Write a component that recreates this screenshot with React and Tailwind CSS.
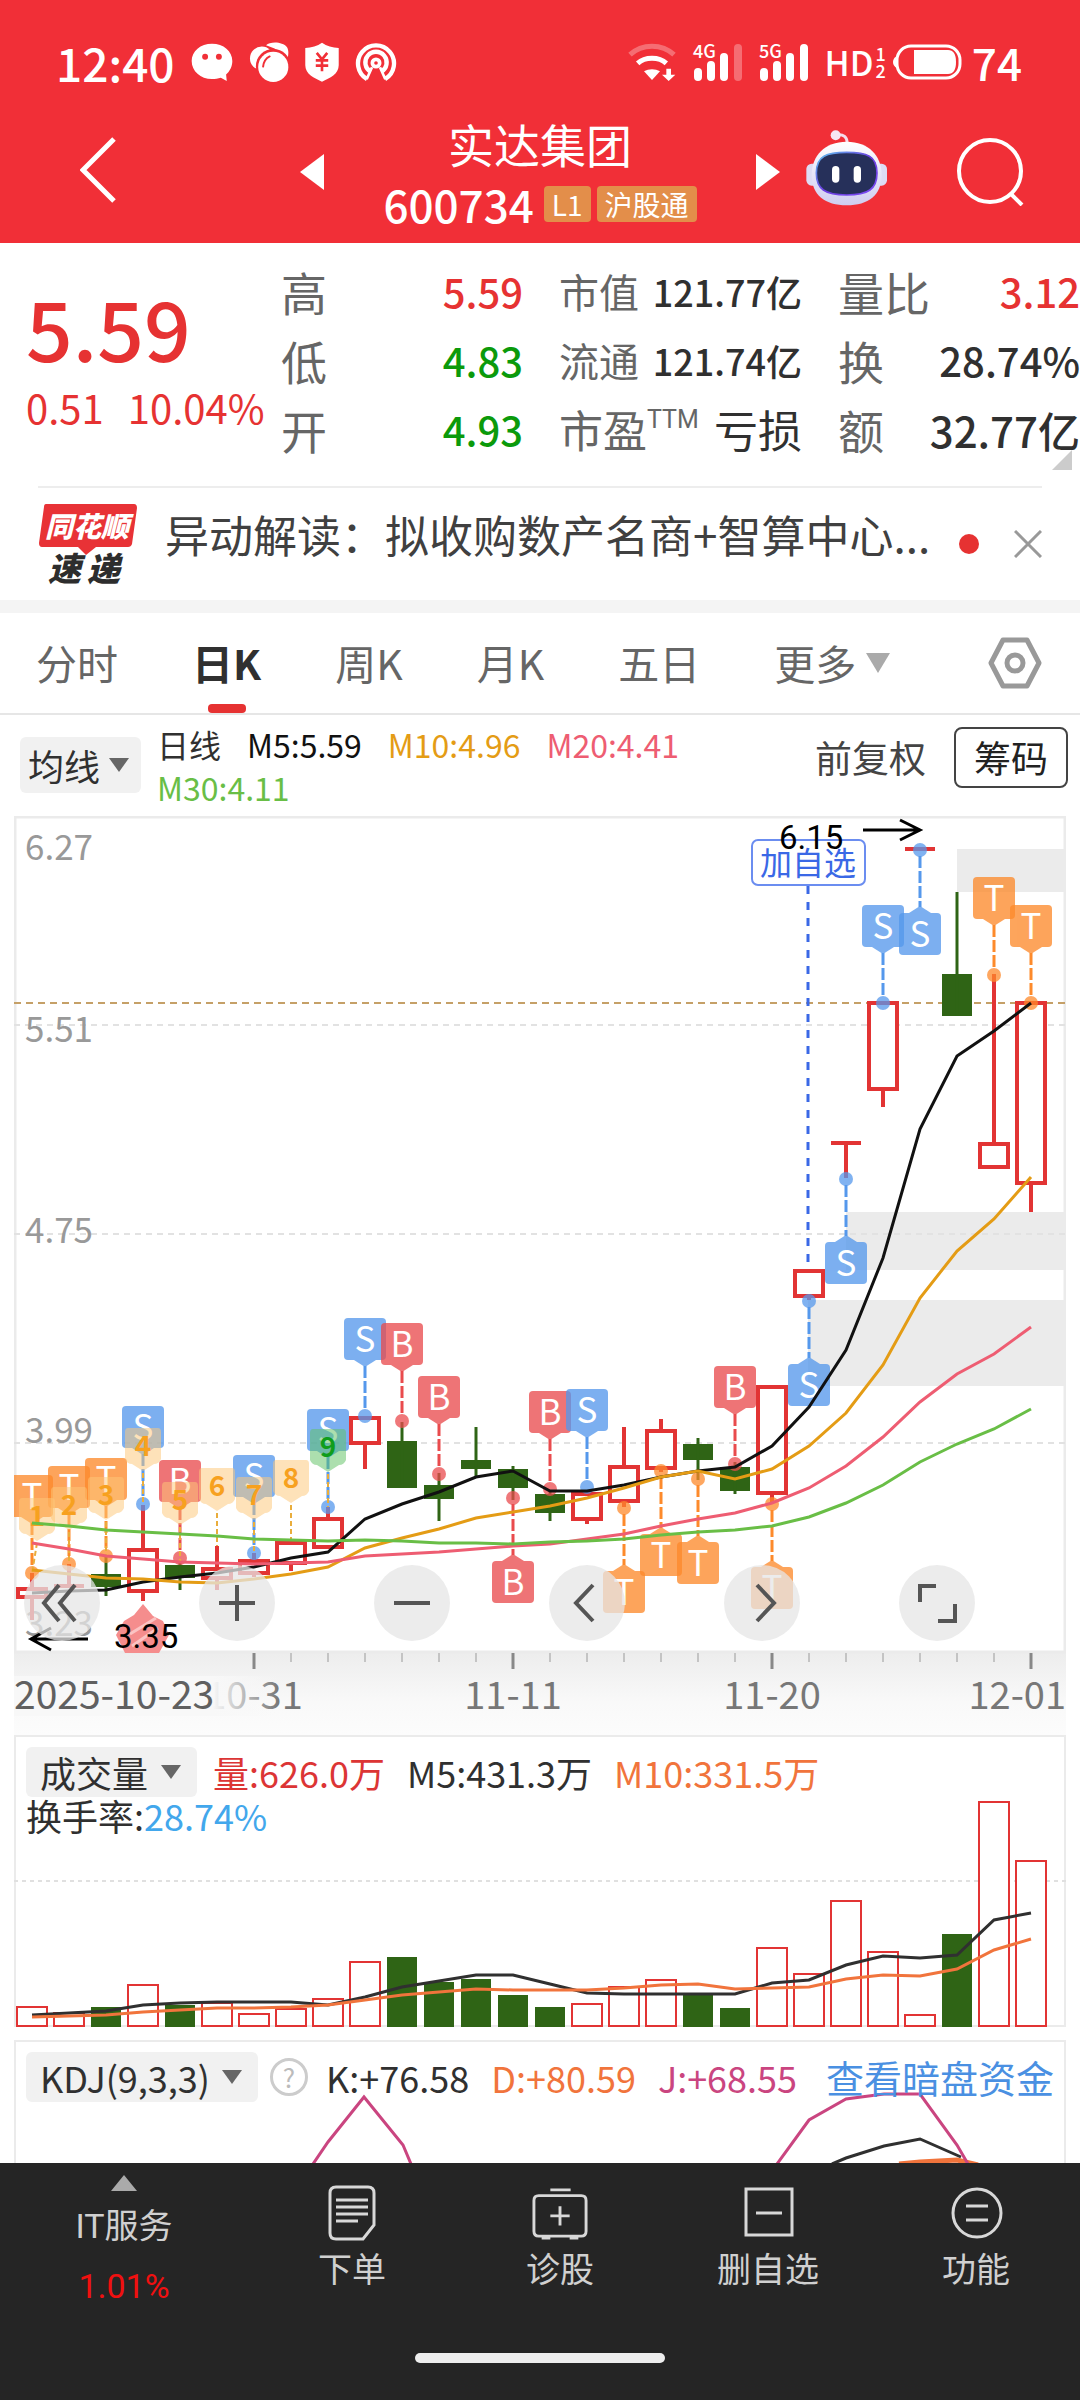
import React, { useState } from 'react';

const STEP = 37;
const RED = '#e23434';
const GREEN = '#2f6415';
const xAt = (i) => 18 + i * STEP;

// [isUp, bodyTop, bodyBottom, high, low]
const candles = [
  [1, 771, 783, 757, 804], [1, 768, 772, 748, 772], [0, 758, 771, 741, 780], [1, 732, 777, 689, 785],
  [0, 749, 762, 747, 774], [1, 751, 764, 730, 774], [1, 743, 759, 737, 761], [1, 725, 749, 725, 755],
  [1, 701, 733, 691, 733], [1, 600, 629, 600, 653], [0, 625, 672, 606, 672], [0, 669, 683, 657, 705],
  [0, 644, 653, 611, 661], [0, 653, 672, 650, 684], [0, 678, 697, 676, 705], [1, 676, 705, 674, 708],
  [1, 649, 687, 611, 691], [1, 613, 654, 603, 656], [0, 628, 644, 622, 664], [0, 651, 675, 646, 678],
  [1, 569, 679, 569, 687], [1, 453, 482, 453, 484], [1, 325, 329, 325, 362], [1, 185, 275, 185, 291],
  [1, 31, 35, 31, 35], [0, 158, 200, 76, 200], [1, 326, 353, 158, 353], [1, 185, 369, 185, 396],
];

const averages = [
  { color: '#111111', ys: [777, 775, 774, 766, 761, 757, 751, 742, 736, 703, 688, 676, 661, 655, 675, 675, 669, 661, 655, 651, 630, 591, 534, 442, 313, 240, 215, 187] },
  { color: '#e49c15', ys: [754, 758, 762, 763, 766, 767, 763, 758, 751, 732, 722, 713, 702, 696, 690, 682, 672, 661, 655, 663, 653, 630, 597, 549, 482, 435, 403, 361] },
  { color: '#ee5d72', ys: [727, 733, 740, 743, 746, 747, 748, 747, 746, 740, 738, 736, 733, 730, 728, 723, 718, 710, 703, 697, 687, 672, 650, 621, 586, 558, 538, 511] },
  { color: '#69be46', ys: [707, 710, 714, 716, 718, 720, 723, 724, 725, 724, 725, 727, 727, 728, 726, 725, 723, 719, 716, 714, 710, 701, 687, 669, 646, 628, 613, 593] },
];

// [index, letter, dotY, flagIsBelow]
const flags = [
  [0, 'T', 757], [1, 'T', 748], [2, 'T', 740], [3, 'S', 688], [4, 'B', 742], [6, 'S', 737], [8, 'S', 691],
  [9, 'S', 600], [10, 'B', 605], [11, 'B', 658], [13, 'B', 682, 1], [14, 'B', 673], [15, 'S', 671],
  [16, 'T', 692, 1], [17, 'T', 655, 1], [18, 'T', 663, 1], [19, 'B', 648], [20, 'T', 688, 1],
  [21, 'S', 485, 1], [22, 'S', 363, 1], [23, 'S', 187], [24, 'S', 34, 1], [26, 'T', 159], [27, 'T', 187],
];
const flagColors = { T: '#fd8a2b', S: '#5598ec', B: '#e94b4d' };

// [index, top, lineEnd]
const counts = [
  [0, 682, 757], [1, 671, 748], [2, 661, 741], [3, 612, 689], [4, 666, 747], [5, 652, 730],
  [6, 661, 737], [7, 644, 723], [8, 613, 691],
];

const volumes = [
  [1, 272], [1, 278], [0, 272], [1, 250], [0, 270], [1, 268], [1, 279], [1, 274], [1, 264], [1, 227],
  [0, 222], [0, 247], [0, 244], [0, 260], [0, 272], [1, 269], [1, 252], [1, 245], [0, 260], [0, 273],
  [1, 213], [1, 239], [1, 166], [1, 217], [1, 280], [0, 199], [1, 67], [1, 126],
];
const volumeLines = [
  { color: '#303030', ys: [280, 278, 276, 270, 268, 267, 267, 267, 270, 262, 252, 246, 240, 240, 249, 258, 259, 259, 259, 259, 248, 245, 230, 221, 223, 220, 185, 178] },
  { color: '#f1743c', ys: [282, 281, 280, 277, 275, 273, 273, 272, 270, 265, 260, 257, 254, 255, 255, 255, 253, 250, 249, 254, 253, 252, 244, 240, 241, 234, 215, 204] },
];

const toPoints = (ys) => ys.map((y, i) => `${xAt(i)},${y}`).join(' ');

const StatusBar = () => (
  <div className="flex h-32 items-center justify-between pb-1 pl-14 pr-[58px]">
    <div className="flex items-center gap-[15px] text-[46px] font-medium leading-none">
      <span>12:40</span>
      <svg viewBox="36 40 132 122" className="h-10 w-[44px]" fill="#fff">
        <path d="M102 45c35 0 62 22 62 53 0 17-8 32-19 41l2 20-18-10c-8 3-18 4-27 4-35 0-62-24-62-55s27-53 62-53z" />
        <circle cx="81" cy="85" r="9" fill="#f12f37" />
        <circle cx="123" cy="85" r="9" fill="#f12f37" />
      </svg>
      <svg viewBox="204 40 120 122" className="h-10 w-10" fill="#fff">
        <circle cx="242" cy="90" r="36" />
        <path d="M255 50c12-12 50-12 64 6 6 10 4 24 2 34l-40-30z" />
        <circle cx="277" cy="114" r="53" fill="#f12f37" />
        <circle cx="277" cy="116" r="46" />
        <path d="M246 115c2-16 8-25 20-31" fill="none" stroke="#f12f37" strokeWidth="6" strokeLinecap="round" />
      </svg>
      <svg viewBox="372 40 108 122" className="h-10 w-9">
        <path d="M426 42c14 10 32 15 51 16v53c0 27-27 39-51 50-24-11-51-23-51-50V58c19-1 37-6 51-16z" fill="#fff" />
        <path d="M410 73l16 20 16-20M426 93v36M407 96h38M407 112h38" fill="none" stroke="#f12f37" strokeWidth="8" />
      </svg>
      <svg viewBox="526 42 124 120" className="h-10 w-[42px]" fill="none" stroke="#fff" strokeWidth="13">
        <path d="M561 153a54 54 0 1 1 54 0" />
        <path d="M572 131a32 32 0 1 1 32 0" />
        <circle cx="588" cy="105" r="11" strokeWidth="11" />
        <path d="M576 118l-16 36M600 118l16 36" strokeWidth="8" />
      </svg>
    </div>
    <div className="flex items-center gap-4 leading-none">
      <svg viewBox="25 42 150 120" className="h-10 w-[50px]" fill="none" stroke="#fff" strokeWidth="15">
        <path d="M34 80c36-34 96-34 132 0" opacity=".3" />
        <path d="M57 106c22-20 64-20 86 0" />
        <path d="M76 130c14-8 34-8 48 0l-24 26z" fill="#fff" stroke="none" />
        <path d="M143 122h14v18h13l-20 19-20-19h13z" fill="#fff" stroke="none" />
      </svg>
      <svg viewBox="0 0 50 40" className="h-10 w-[50px] overflow-visible" fill="none" stroke="#fff" strokeWidth="8" strokeLinecap="round">
        <text x="0" y="16" fontSize="18" fontWeight="500" fill="#fff" stroke="none">4G</text>
        <path d="M5 30v5M18 23v12M31 15v20" />
        <path d="M45 6v29" opacity=".3" />
      </svg>
      <svg viewBox="0 0 50 40" className="h-10 w-[50px] overflow-visible" fill="none" stroke="#fff" strokeWidth="8" strokeLinecap="round">
        <text x="0" y="16" fontSize="18" fontWeight="500" fill="#fff" stroke="none">5G</text>
        <path d="M5 30v5M18 23v12M31 15v20M45 6v29" />
      </svg>
      <div className="flex items-center gap-0.5">
        <span className="text-[34px] font-medium">HD</span>
        <span className="flex flex-col text-[18px] font-medium leading-[17px]"><span>1</span><span>2</span></span>
      </div>
      <svg viewBox="0 0 70 36" className="-ml-2.5 h-9 w-[70px]">
        <rect x="5" y="2" width="63" height="32" rx="14" fill="none" stroke="#fff" strokeWidth="3" />
        <path d="M22 6h34q8 0 8 12t-8 12H22z" fill="#fff" />
        <path d="M5 12q-4 2-4 6t4 6z" fill="#fff" />
      </svg>
      <span className="-ml-1.5 text-[44px] font-medium">74</span>
    </div>
  </div>
);

const Header = () => (
  <header className="bg-[#f12f37] text-white">
    <StatusBar />
    <div className="grid h-[115px] grid-cols-[1fr_480px_1fr]">
      <button aria-label="返回" className="pb-8 pl-20">
        <svg viewBox="0 0 36 66" className="h-[66px] w-9" fill="none" stroke="#fff" strokeWidth="5">
          <path d="M34 2L3 33l31 31" />
        </svg>
      </button>
      <div className="flex items-start justify-between">
        <button aria-label="上一只" className="mt-[26px]">
          <svg viewBox="0 0 24 36" className="h-9 w-6" fill="#fff"><path d="M24 0v36L0 18z" /></svg>
        </button>
        <div className="flex flex-col items-center">
          <h1 className="-mt-4 text-[46px] leading-[62px]">实达集团</h1>
          <div className="flex items-center gap-1.5 leading-[60px]">
            <span className="mr-1 text-[44px] font-medium">600734</span>
            <span className="rounded-sm bg-[#e38e4a] px-2 text-[28px] leading-9">L1</span>
            <span className="rounded-sm bg-[#e38e4a] px-2 text-[28px] leading-9">沪股通</span>
          </div>
        </div>
        <button aria-label="下一只" className="mt-[26px]">
          <svg viewBox="0 0 24 36" className="h-9 w-6" fill="#fff"><path d="M0 0v36l24-18z" /></svg>
        </button>
      </div>
      <div className="flex items-start justify-between pl-6 pr-[54px]">
        <button aria-label="智能助手">
          <svg viewBox="45 25 255 240" className="h-20 w-[85px]">
            <defs>
              <linearGradient id="shell" x1="0" y1="0" x2="0" y2="1">
                <stop offset="0" stopColor="#fff" /><stop offset="1" stopColor="#cfcdf0" />
              </linearGradient>
              <linearGradient id="rim" x1="0" y1="0" x2="1" y2="1">
                <stop offset="0" stopColor="#5fc7ef" /><stop offset=".5" stopColor="#6a3de0" /><stop offset="1" stopColor="#7d4df5" />
              </linearGradient>
            </defs>
            <path d="M140 46c24-4 36 6 34 28" fill="none" stroke="#f5dcea" strokeWidth="9" />
            <circle cx="140" cy="47" r="15" fill="#f7e6f2" />
            <rect x="52" y="132" width="242" height="66" rx="16" fill="#dddcf4" />
            <path d="M173 66c66 0 105 42 105 100 0 60-40 91-105 91S68 226 68 166C68 108 107 66 173 66z" fill="url(#shell)" />
            <path d="M173 98c60 0 91 10 91 62 0 48-26 66-91 66s-91-18-91-66c0-52 31-62 91-62z" fill="#26305a" stroke="url(#rim)" strokeWidth="5" />
            <rect x="129" y="139" width="22" height="50" rx="11" fill="#fff" />
            <rect x="194" y="139" width="22" height="50" rx="11" fill="#fff" />
          </svg>
        </button>
        <button aria-label="搜索" className="mt-2">
          <svg viewBox="0 0 70 70" className="h-[70px] w-[70px]" fill="none" stroke="#fff" strokeWidth="4">
            <circle cx="34" cy="35" r="31" />
            <path d="M54 57l12 12" />
          </svg>
        </button>
      </div>
    </div>
  </header>
);

const Quote = () => (
  <section className="flex h-[243px] pt-3.5 leading-[69px] text-[#303030]">
    <div className="w-[255px] shrink-0 pl-[26px] text-[#e63232]">
      <div className="mt-7 text-[82px] font-medium leading-[84px]">5.59</div>
      <div className="flex gap-6 whitespace-nowrap text-[40px] leading-[76px]"><span>0.51</span><span>10.04%</span></div>
    </div>
    <dl className="grid w-[268px] shrink-0 grid-cols-[auto_auto] content-start justify-between text-[40px] font-medium">
      <dt className="pl-[26px] text-[46px] font-normal text-[#666]">高</dt><dd className="text-right text-[#e63232]">5.59</dd>
      <dt className="pl-[26px] text-[46px] font-normal text-[#666]">低</dt><dd className="text-right text-[#0b9a0b]">4.83</dd>
      <dt className="pl-[26px] text-[46px] font-normal text-[#666]">开</dt><dd className="text-right text-[#0b9a0b]">4.93</dd>
    </dl>
    <dl className="ml-9 flex w-[243px] shrink-0 flex-col whitespace-nowrap">
      <div className="flex justify-between"><dt className="text-[40px] text-[#666]">市值</dt><dd className="text-[36px] font-medium">121.77亿</dd></div>
      <div className="flex justify-between"><dt className="text-[40px] text-[#666]">流通</dt><dd className="text-[36px] font-medium">121.74亿</dd></div>
      <div className="flex justify-between">
        <dt className="flex text-[44px] text-[#666]">市盈<span className="font-['Roboto',sans-serif] text-[25px] leading-[50px]">TTM</span></dt>
        <dd className="text-[44px]">亏损</dd>
      </div>
    </dl>
    <dl className="relative ml-9 flex flex-1 flex-col whitespace-nowrap">
      <div className="flex justify-between"><dt className="text-[46px] text-[#666]">量比</dt><dd className="text-[40px] font-medium text-[#e63232]">3.12</dd></div>
      <div className="flex justify-between"><dt className="text-[46px] text-[#666]">换</dt><dd className="text-[40px] font-medium">28.74%</dd></div>
      <div className="flex justify-between"><dt className="text-[46px] text-[#666]">额</dt><dd className="text-[42px] font-medium">32.77亿</dd></div>
      <svg viewBox="0 0 20 20" className="absolute bottom-4 right-2 h-5 w-5" fill="#ccc"><path d="M20 0v20H0z" /></svg>
    </dl>
  </section>
);

const News = () => (
  <section className="border-b-[13px] border-[#f4f4f4]">
    <div className="mx-[38px] flex h-[114px] items-center border-t-2 border-[#ededed]">
      <svg viewBox="0 0 100 82" className="h-[82px] w-[100px] shrink-0 overflow-visible" fontStyle="italic" fontWeight="900">
        <path d="M8 1h88q3 0 3 4l-5 36q-1 3-4 3H58l-10 8-8-8H4q-3 0-3-4L6 4q0-3 2-3z" fill="#e83236" />
        <text x="7" y="34" fontSize="28" fill="#fff">同花顺</text>
        <text x="10" y="78" fontSize="33" fill="#2d2d2d">速</text>
        <text x="49" y="78" fontSize="33" fill="#2d2d2d">递</text>
      </svg>
      <a href="#news" className="ml-[27px] flex-1 truncate pb-5 text-[44px] text-[#404040]">异动解读：拟收购数产名商+智算中心...</a>
      <span className="mr-[35px] h-5 w-5 rounded-full bg-[#e63232]" />
      <button aria-label="关闭">
        <svg viewBox="0 0 28 28" className="h-7 w-7" fill="none" stroke="#999" strokeWidth="3"><path d="M1 1l26 26M27 1L1 27" /></svg>
      </button>
    </div>
  </section>
);

const periods = ['分时', '日K', '周K', '月K', '五日'];

const Tabs = () => {
  const [active, setActive] = useState('日K');

  return (
    <nav className="flex h-[102px] items-stretch gap-[74px] border-b-2 border-[#e6e6e6] pl-9 pr-[38px] text-[41px] text-[#666]">
      {periods.map((p) => (
        <button key={p} onClick={() => setActive(p)} className="grid">
          <span className={`col-start-1 row-start-1 self-center ${p === active ? 'font-bold text-[#303030]' : ''}`}>{p}</span>
          {p === active && <span className="col-start-1 row-start-1 h-[9px] w-[38px] self-end justify-self-center rounded bg-[#e63232]" />}
        </button>
      ))}
      <button className="flex items-center gap-2.5">
        更多
        <svg viewBox="0 0 24 20" className="h-5 w-6" fill="#aaa"><path d="M0 0h24L12 20z" /></svg>
      </button>
      <button aria-label="设置" className="ml-auto">
        <svg viewBox="0 0 54 52" className="h-[52px] w-[54px]" fill="none" stroke="#999" strokeWidth="5" strokeLinejoin="round">
          <path d="M15 3h24l12 23-12 23H15L3 26z" />
          <circle cx="27" cy="26" r="8" />
        </svg>
      </button>
    </nav>
  );
};

const Picker = ({ label, name }) => (
  <div className="relative shrink-0 rounded-md bg-[#f1f1f1]">
    <select aria-label={name} className="h-[50px] appearance-none bg-transparent pl-3.5 pr-12 text-[36px] leading-[50px] text-[#303030]">
      <option>{label}</option>
    </select>
    <svg viewBox="0 0 20 14" className="pointer-events-none absolute right-4 top-[18px] h-3.5 w-5" fill="#666"><path d="M0 0h20L10 14z" /></svg>
  </div>
);

const IndicatorRow = () => (
  <section className="flex items-start justify-between px-3 pb-[7px] pl-5 pt-2">
    <div className="flex items-start">
      <div className="relative mt-3.5 rounded-md bg-[#f1f1f1]">
        <select aria-label="指标" className="h-14 appearance-none bg-transparent pl-2 pr-10 text-[36px] text-[#303030]">
          <option>均线</option>
        </select>
        <svg viewBox="0 0 20 14" className="pointer-events-none absolute right-3 top-[21px] h-3.5 w-5" fill="#666"><path d="M0 0h20L10 14z" /></svg>
      </div>
      <div className="ml-4 flex max-w-[640px] flex-wrap gap-x-[26px] text-[32px] leading-[43px] text-[#303030]">
        <span>日线</span>
        <span className="text-[#111]">M5:5.59</span>
        <span className="text-[#e49c15]">M10:4.96</span>
        <span className="text-[#ee5d72]">M20:4.41</span>
        <span className="text-[#69be46]">M30:4.11</span>
      </div>
    </div>
    <div className="flex shrink-0 items-center gap-7 pt-1">
      <button className="text-[37px] text-[#444]">前复权</button>
      <button className="h-[61px] rounded-lg border-2 border-[#444] px-[18px] text-[37px] leading-none text-[#222]">筹码</button>
    </div>
  </section>
);

const Flag = ({ i, letter, dot, below }) => {
  const x = xAt(i);
  const color = flagColors[letter];
  const top = below ? dot + 63 : dot - 98;
  return (
    <g>
      <line x1={x} x2={x} y1={below ? dot + 6 : top + 48} y2={below ? top - 6 : dot - 6} stroke={color} strokeWidth="3" strokeDasharray="12 3" />
      <circle cx={x} cy={dot} r="7" fill={color} opacity=".75" />
      <g fill={color} opacity=".77">
        <rect x={x - 21} y={top} width="42" height="42" rx="4" />
        <path d={below ? `M${x - 11} ${top}l11-7 11 7z` : `M${x - 11} ${top + 42}l11 7 11-7z`} />
      </g>
      <text x={x} y={top + 34} fontSize="35" fill="#fff" textAnchor="middle">{letter}</text>
    </g>
  );
};

const Candle = ({ i, up, top, bottom, high, low }) => {
  const x = xAt(i);
  const color = up ? RED : GREEN;
  if (!up) {
    return (
      <g fill={color}>
        <rect x={x - 15} y={top} width="30" height={bottom - top} />
        <line x1={x} x2={x} y1={high} y2={low} stroke={color} strokeWidth="3" />
      </g>
    );
  }
  return (
    <g>
      {high < top && <line x1={x} x2={x} y1={high} y2={top} stroke={color} strokeWidth="4" />}
      {low > bottom && <line x1={x} x2={x} y1={bottom} y2={low} stroke={color} strokeWidth="4" />}
      {bottom - top > 5
        ? <rect x={x - 14} y={top + 2} width="28" height={bottom - top - 4} fill="#fff" stroke={color} strokeWidth="4" />
        : <rect x={x - 15} y={top} width="30" height="4" fill={color} />}
    </g>
  );
};

const controls = [
  { label: '最早', d: 'M35 20L20 38l15 18M51 20L36 38l15 18' },
  { label: '放大', d: 'M20 38h36M38 20v36' },
  { label: '缩小', d: 'M20 38h36' },
  { label: '左移', d: 'M44 20L27 38l17 18' },
  { label: '右移', d: 'M33 20l17 18-17 18' },
  { label: '全屏', d: 'M21 37V21h16M56 39v17H39' },
];

const KLineChart = () => (
  <section className="mx-3.5 grid">
    <svg viewBox="0 0 1052 919" className="col-start-1 row-start-1 w-full">
      <defs>
        <linearGradient id="axisFade" x1="0" y1="0" x2="0" y2="1">
          <stop offset="0" stopColor="#ededed" /><stop offset=".6" stopColor="#f9f9f9" /><stop offset="1" stopColor="#fcfcfc" />
        </linearGradient>
        <linearGradient id="dateFade" x1="0" y1="0" x2="1" y2="0">
          <stop offset=".75" stopColor="#f8f8f8" /><stop offset="1" stopColor="#f8f8f8" stopOpacity="0" />
        </linearGradient>
      </defs>
      <rect x="0" y="837" width="1052" height="82" fill="url(#axisFade)" />
      <rect x="1" y="1" width="1050" height="835" fill="#fff" stroke="#ebebeb" strokeWidth="3" />
      <g fill="#ebebeb">
        <rect x="943" y="33" width="109" height="43" />
        <rect x="832" y="396" width="220" height="58" />
        <rect x="794" y="484" width="258" height="86" />
      </g>
      <path d="M0 209h1052M0 418h1052M0 627h1052" stroke="#e2e2e2" strokeWidth="2" strokeDasharray="6 5" />
      <path d="M0 187h1052" stroke="#c5a067" strokeWidth="2" strokeDasharray="7 5" />
      <g fontSize="35" fill="#999">
        <text x="11" y="44">6.27</text>
        <text x="11" y="226">5.51</text>
        <text x="11" y="427">4.75</text>
        <text x="11" y="627">3.99</text>
        <text x="11" y="820">3.23</text>
      </g>

      <path d="M794 70v377" stroke="#3a68e6" strokeWidth="3" strokeDasharray="8 8" />
      <rect x="738" y="24" width="113" height="45" rx="6" fill="#fff" stroke="#6b8df0" strokeWidth="2" />
      <text x="794" y="59" fontSize="32" fill="#3a68e6" textAnchor="middle">加自选</text>

      {candles.map(([up, top, bottom, high, low], i) => (
        <Candle key={i} i={i} up={up} top={top} bottom={bottom} high={high} low={low} />
      ))}

      <path d="M129 788l10 12 10 5 6 14-10 18h-34l-9-18 8-14 10-6z" fill="#f58d8d" />
      <path d="M116 818l26-16M118 830l26-18" stroke="#fbc3c3" strokeWidth="3" />

      {flags.map(([i, letter, dot, below]) => (
        <Flag key={i} i={i} letter={letter} dot={dot} below={below} />
      ))}

      {counts.map(([i, top, end], n) => {
        const x = n === 0 ? xAt(0) + 5 : xAt(i);
        const color = n === 8 ? '#0f9d1c' : '#f7a11f';
        return (
          <g key={i}>
            <path d={`M${x - 15} ${top}h30q3 0 3 4v27q-2 5-7 5l-11 7-11-7q-5 0-7-5v-27q0-4 3-4z`} fill={n === 8 ? '#5fc163' : '#fdc878'} opacity=".52" />
            <line x1={x} x2={xAt(i)} y1={top + 45} y2={end} stroke="#e9ad3c" strokeWidth="2" strokeDasharray="5 3" />
            <text x={x} y={top + 28} fontSize="28" fontWeight="700" fill={color} textAnchor="middle">{n + 1}</text>
          </g>
        );
      })}

      {averages.map((line) => (
        <polyline key={line.color} points={toPoints(line.ys)} fill="none" stroke={line.color} strokeWidth="3" />
      ))}

      <g fontFamily="Roboto, sans-serif" fontSize="33" fill="#000">
        <text x="765" y="33">6.15</text>
        <text x="100" y="832">3.35</text>
      </g>
      <g fill="none" stroke="#000" strokeWidth="3">
        <path d="M849 14h56M886 4l20 10-20 10" />
        <path d="M74 823H18M37 812l-20 11 20 11" />
      </g>

      {candles.map((_, i) => (i >= 6) && (
        <line key={i} x1={xAt(i)} x2={xAt(i)} y1="837" y2={(i - 6) % 7 === 0 ? 853 : 846} stroke={(i - 6) % 7 === 0 ? '#888' : '#c4c4c4'} strokeWidth={(i - 6) % 7 === 0 ? 3 : 2} />
      ))}
      <g fontSize="38" fill="#777">
        <text x={xAt(6)} y="893" textAnchor="middle">10-31</text>
        <text x={xAt(13)} y="893" textAnchor="middle">11-11</text>
        <text x={xAt(20)} y="893" textAnchor="middle">11-20</text>
        <text x="1052" y="893" textAnchor="end">12-01</text>
        <rect x="0" y="860" width="265" height="40" fill="url(#dateFade)" />
        <text x="0" y="893" fontSize="39" fill="#606060">2025-10-23</text>
      </g>
    </svg>
    <div className="z-10 col-start-1 row-start-1 mb-[94px] flex justify-between self-end pl-2.5 pr-[91px]">
      {controls.map((c) => (
        <button key={c.label} aria-label={c.label} className="h-[76px] w-[76px] rounded-full bg-[#e6e6e6]/75">
          <svg viewBox="0 0 76 76" className="h-full w-full" fill="none" stroke="#555" strokeWidth="4"><path d={c.d} /></svg>
        </button>
      ))}
    </div>
  </section>
);

const VolumeChart = () => (
  <section className="mx-3.5 grid">
    <svg viewBox="0 0 1052 293" className="col-start-1 row-start-1 w-full">
      <rect x="1" y="1" width="1050" height="290" fill="none" stroke="#ebebeb" strokeWidth="2" />
      <path d="M0 146h1052" stroke="#e0e0e0" strokeWidth="2" strokeDasharray="4 4" />
      {volumes.map(([up, top], i) => up
        ? <rect key={i} x={xAt(i) - 15} y={top} width="30" height={291 - top} fill="#fff" stroke={RED} strokeWidth="2" />
        : <rect key={i} x={xAt(i) - 15} y={top} width="30" height={292 - top} fill={GREEN} />)}
      {volumeLines.map((line) => (
        <polyline key={line.color} points={toPoints(line.ys)} fill="none" stroke={line.color} strokeWidth="3" />
      ))}
    </svg>
    <div className="z-10 col-start-1 row-start-1 px-3 pt-3 text-[36px] text-[#303030]">
      <div className="flex items-center gap-[22px] whitespace-nowrap leading-[50px]">
        <Picker label="成交量" name="副图一" />
        <span className="-ml-1.5 text-[#dc3535]">量:626.0万</span>
        <span>M5:431.3万</span>
        <span className="text-[#f1743c]">M10:331.5万</span>
      </div>
      <div className="leading-9">换手率:<span className="text-[#42a7ec]">28.74%</span></div>
    </div>
  </section>
);

const KdjChart = () => (
  <section className="mx-3.5 mt-3 grid">
    <svg viewBox="0 0 1052 123" className="col-start-1 row-start-1 w-full" fill="none" strokeWidth="3">
      <path d="M1 124V1h1050v123" stroke="#ebebeb" strokeWidth="2" />
      <path d="M885 124l21-2 37-2 21 5" stroke="#f1743c" strokeWidth="5" />
      <path d="M818 124l14-6 38-12 36-7 41 18" stroke="#303030" />
      <path d="M299 124l15-22 36-45 39 48 8 19M763 124l32-44 37-21 38-5h36l37 51 11 19" stroke="#ca4580" />
    </svg>
    <div className="z-10 col-start-1 row-start-1 flex items-center gap-[22px] self-start whitespace-nowrap px-3 pt-3 text-[36px] leading-[50px] text-[#303030]">
      <Picker label="KDJ(9,3,3)" name="副图二" />
      <button aria-label="说明" className="-ml-2.5 -mr-1 h-[38px] w-[38px] shrink-0 rounded-full border-[3px] border-[#ccc] text-[26px] leading-8 text-[#bbb]">?</button>
      <span>K:+76.58</span>
      <span className="text-[#f1743c]">D:+80.59</span>
      <span className="text-[#ca4580]">J:+68.55</span>
      <a href="#funds" className="ml-auto text-[38px] text-[#4a90e2]">查看暗盘资金</a>
    </div>
  </section>
);

const navItems = [
  {
    label: '下单',
    icon: <path d="M9 2h32q6 0 6 6v32L36 54H9q-6 0-6-6V8q0-6 6-6zM9 15h32M9 22h32M9 29h32M9 36h22" />,
  },
  {
    label: '诊股',
    icon: <path d="M6 10h44q5 0 5 5v32q0 5-5 5H6q-5 0-5-5V15q0-5 5-5zM18 4h21M9 54h9M38 54h9M28 21v20M18 31h20" />,
  },
  { label: '删自选', icon: <path d="M3 4h46v46H3zM13 28h26" /> },
  { label: '功能', icon: <path d="M50 28a24 24 0 1 1-48 0a24 24 0 1 1 48 0M15 21h22M15 35h22" /> },
];

const BottomNav = () => (
  <nav className="bg-[#252525] pb-[39px] text-[34px] text-[#d0d0d0]">
    <div className="grid h-[190px] grid-cols-[248px_repeat(4,1fr)]">
      <button className="flex flex-col items-center pt-3 font-['Roboto','Noto_Sans_CJK_SC',sans-serif]">
        <svg viewBox="0 0 26 16" className="h-4 w-[26px]" fill="#aaa"><path d="M13 0l13 16H0z" /></svg>
        <span className="mt-2 leading-[54px]">IT服务</span>
        <span className="leading-[66px] text-[#f01010]">1.01%</span>
      </button>
      {navItems.map((item) => (
        <button key={item.label} className="flex flex-col items-center pt-[22px]">
          <svg viewBox={item.label === '诊股' ? '-1 0 58 56' : '-2 0 54 56'} className="h-14 w-14" fill="none" stroke="#d8d8d8" strokeWidth="3">
            {item.icon}
          </svg>
          <span className="leading-[54px]">{item.label}</span>
        </button>
      ))}
    </div>
    <div className="mx-auto h-2.5 w-[250px] rounded-full bg-[#eee]" />
  </nav>
);

const App = () => (
  <div className="overflow-x-hidden bg-white font-['Noto_Sans_CJK_SC',sans-serif]">
    <Header />
    <Quote />
    <News />
    <Tabs />
    <IndicatorRow />
    <main>
      <KLineChart />
      <VolumeChart />
      <KdjChart />
    </main>
    <BottomNav />
  </div>
);

export default App;
